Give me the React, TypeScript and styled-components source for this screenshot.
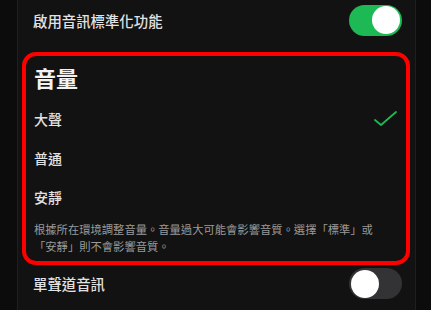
import styled, { createGlobalStyle } from 'styled-components';

const GlobalStyle = createGlobalStyle`
  html, body {
    margin: 0;
    padding: 0;
    background: #0c0c0c;
  }
  body {
    font-family: "Noto Sans CJK TC", "Noto Sans", sans-serif;
    color: #e4e4e4;
  }
`;

const Page = styled.div`
  width: 431px;
  height: 310px;
  overflow: hidden;
  background: #0c0c0c;
  padding: 0 15px 0 17px;
  box-sizing: border-box;
`;

const Panel = styled.div`
  height: 100%;
  background: #121212;
  border-left: 1px solid #1f1f1f;
  border-right: 1px solid #1f1f1f;
  padding: 0 5px 0 4px;
  display: flex;
  flex-direction: column;
`;

const SettingRow = styled.div<{ $height: number }>`
  height: ${(p) => p.$height}px;
  display: flex;
  align-items: center;
  justify-content: space-between;
  padding: 0 8px 0 11px;
`;

const Label = styled.span`
  font-size: 14.4px;
  font-weight: 500;
  color: #e2e2e2;
  letter-spacing: 0;
`;

const Track = styled.div<{ $on: boolean }>`
  width: 53px;
  height: 31px;
  border-radius: 16px;
  background: ${(p) => (p.$on ? '#1db954' : '#333335')};
  display: flex;
  align-items: center;
  justify-content: ${(p) => (p.$on ? 'flex-end' : 'flex-start')};
  padding: 0 2px;
  box-sizing: border-box;
`;

const Knob = styled.div`
  width: 28px;
  height: 28px;
  border-radius: 50%;
  background: #ffffff;
`;

const Section = styled.div`
  margin-top: 12px;
  border: 4px solid #ff0000;
  border-radius: 14px;
  padding: 6px 8px 6px 8px;
  display: flex;
  flex-direction: column;
`;

const Heading = styled.h2`
  margin: 0;
  font-size: 22px;
  line-height: 30px;
  font-weight: 700;
  color: #f2f2f2;
`;

const Options = styled.div`
  margin-top: 7px;
  display: flex;
  flex-direction: column;
`;

const Option = styled.div`
  height: 39px;
  display: flex;
  align-items: center;
  justify-content: space-between;
`;

const OptionLabel = styled.span`
  font-size: 14px;
  font-weight: 500;
  color: #e2e2e2;
`;

const Description = styled.p`
  margin: 5px 0 0;
  font-size: 11.3px;
  line-height: 17px;
  color: #9a9a9a;
`;

function Toggle({ on }: { on: boolean }) {
  return (
    <Track $on={on}>
      <Knob />
    </Track>
  );
}

function Check() {
  return (
    <svg width="24" height="18" viewBox="0 0 24 18" fill="none">
      <path d="M1 10 L7 15 L22 2" stroke="#1db954" strokeWidth="1.8" strokeLinecap="round" strokeLinejoin="round" />
    </svg>
  );
}

const levels = [
  { label: '大聲', selected: true },
  { label: '普通', selected: false },
  { label: '安靜', selected: false },
];

export default function App() {
  return (
    <>
      <GlobalStyle />
      <Page>
        <Panel>
          <SettingRow $height={40}>
            <Label>啟用音訊標準化功能</Label>
            <Toggle on />
          </SettingRow>
          <Section>
            <Heading>音量</Heading>
            <Options>
              {levels.map((l) => (
                <Option key={l.label}>
                  <OptionLabel>{l.label}</OptionLabel>
                  {l.selected && <Check />}
                </Option>
              ))}
            </Options>
            <Description>
              根據所在環境調整音量。音量過大可能會影響音質。選擇「標準」或
              <br />
              「安靜」則不會影響音質。
            </Description>
          </Section>
          <SettingRow $height={37}>
            <Label>單聲道音訊</Label>
            <Toggle on={false} />
          </SettingRow>
        </Panel>
      </Page>
    </>
  );
}
